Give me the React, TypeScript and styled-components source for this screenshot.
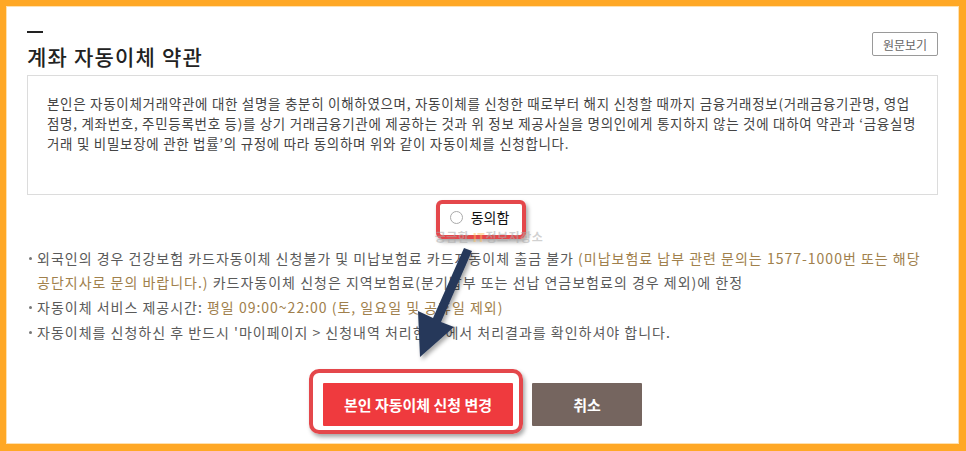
import styled, { createGlobalStyle } from "styled-components";

const GlobalStyle = createGlobalStyle`
  body {
    margin: 0;
    font-family: "Noto Sans CJK KR", "Liberation Sans", sans-serif;
  }
`;

// 주황 테두리 캡처 프레임
const Frame = styled.div`
  width: 966px;
  height: 451px;
  box-sizing: border-box;
  background: #ffa826;
  padding: 6px 7px 7px 6px;
`;
const Panel = styled.div`
  position: relative;
  height: 100%;
  box-sizing: border-box;
  background: #fff;
  box-shadow: inset 0 0 0 1px #ffe1b0;
  padding: 25px 21px 0 21px;
  display: flex;
  flex-direction: column;
`;
const Header = styled.div`
  display: flex;
  justify-content: space-between;
  align-items: flex-start;
`;
const TitleBlock = styled.div`
  display: flex;
  flex-direction: column;
`;
const Dash = styled.span`
  width: 16px;
  height: 2px;
  background: #222;
`;
const Title = styled.h2`
  margin: 9px 0 0;
  font-size: 21px;
  line-height: 28px;
  font-weight: 500;
  letter-spacing: 1.2px;
  color: #222;
`;
const OriginalButton = styled.button`
  margin-top: 1px;
  width: 66px;
  height: 24px;
  box-sizing: border-box;
  background: #fff;
  border: 1px solid #9a9a9a;
  border-radius: 2px;
  font-family: inherit;
  font-size: 12px;
  color: #666;
  padding: 0;
`;
const TermsBox = styled.div`
  margin-top: 5px;
  height: 120px;
  box-sizing: border-box;
  border: 1px solid #dcdcdc;
  padding: 17px 19px 0;
  font-size: 13.5px;
  letter-spacing: 0.7px;
  line-height: 20px;
  color: #444;
  white-space: nowrap;
`;
const AgreeRow = styled.div`
  position: relative;
  margin-top: 14px;
  margin-bottom: 4px;
  display: flex;
  justify-content: center;
`;
const AgreeLabel = styled.label`
  position: relative;
  display: flex;
  align-items: center;
  gap: 8px;
  height: 16px;
  line-height: 16px;
  font-size: 14px;
  color: #111;
  margin-left: -6px;
`;
const Radio = styled.span`
  width: 11px;
  height: 11px;
  border-radius: 50%;
  border: 1px solid #aaa;
  background: #fff;
`;
// 캡처 위의 빨간 강조 박스
const Highlight = styled.span<{ $inset: string; $radius: number }>`
  position: absolute;
  inset: ${(p) => p.$inset};
  border: 4px solid #e4474b;
  border-radius: ${(p) => p.$radius}px;
  box-shadow: 2px 3px 4px rgba(0, 0, 0, 0.35);
  pointer-events: none;
`;
const Watermark = styled.span`
  position: absolute;
  left: 50%;
  top: 22px;
  transform: translateX(-44%);
  font-size: 12px;
  line-height: 12px;
  font-weight: 700;
  letter-spacing: 0.5px;
  color: rgba(170, 170, 170, 0.55);
  white-space: nowrap;
  b {
    color: rgba(255, 190, 90, 0.5);
  }
`;
const Notes = styled.ul`
  list-style: none;
  margin: 17px 0 0;
  padding: 0;
  font-size: 14px;
  letter-spacing: 1px;
  line-height: 24px;
  color: #5a5a5a;
  white-space: nowrap;
`;
const Note = styled.li`
  position: relative;
  padding-left: 10px;
  margin-bottom: 1px;
  &::before {
    content: "";
    position: absolute;
    left: 2px;
    top: 11px;
    width: 3px;
    height: 3px;
    border-radius: 50%;
    background: #777;
  }
`;
const Accent = styled.span`
  color: #a0804c;
`;
const ButtonRow = styled.div`
  margin-top: 38px;
  display: flex;
  justify-content: center;
  gap: 19px;
`;
const ButtonWrap = styled.div`
  position: relative;
`;
const ActionButton = styled.button<{ $primary?: boolean }>`
  height: 43px;
  width: ${(p) => (p.$primary ? 190 : 110)}px;
  border: none;
  border-radius: 1px;
  background: ${(p) => (p.$primary ? "#ef3a3e" : "#75655f")};
  color: #fff;
  font-family: inherit;
  font-size: 15px;
  font-weight: 700;
  padding: 0;
`;
const ArrowLayer = styled.svg`
  position: absolute;
  left: 0;
  top: 0;
  pointer-events: none;
`;

export default function App() {
  return (
    <>
      <GlobalStyle />
      <Frame>
        <Panel>
          <Header>
            <TitleBlock>
              <Dash />
              <Title>계좌 자동이체 약관</Title>
            </TitleBlock>
            <OriginalButton>원문보기</OriginalButton>
          </Header>

          <TermsBox>
            본인은 자동이체거래약관에 대한 설명을 충분히 이해하였으며, 자동이체를 신청한 때로부터 해지 신청할 때까지 금융거래정보(거래금융기관명, 영업
            <br />
            점명, 계좌번호, 주민등록번호 등)를 상기 거래금융기관에 제공하는 것과 위 정보 제공사실을 명의인에게 통지하지 않는 것에 대하여 약관과 ‘금융실명
            <br />
            거래 및 비밀보장에 관한 법률’의 규정에 따라 동의하며 위와 같이 자동이체를 신청합니다.
          </TermsBox>

          <AgreeRow>
            <AgreeLabel>
              <Radio />
              동의함
              <Highlight $inset="-9px -17px -14px -14px" $radius={6} />
            </AgreeLabel>
            <Watermark>
              궁금한 <b>IT</b>정보저장소
            </Watermark>
          </AgreeRow>

          <Notes>
            <Note>
              외국인의 경우 건강보험 카드자동이체 신청불가 및 미납보험료 카드자동이체 출금 불가{" "}
              <Accent>(미납보험료 납부 관련 문의는 1577-1000번 또는 해당</Accent>
              <br />
              <Accent>공단지사로 문의 바랍니다.)</Accent> 카드자동이체 신청은 지역보험료(분기납부 또는 선납 연금보험료의 경우 제외)에 한정
            </Note>
            <Note>
              자동이체 서비스 제공시간: <Accent>평일 09:00~22:00 (토, 일요일 및 공휴일 제외)</Accent>
            </Note>
            <Note>자동이체를 신청하신 후 반드시 '마이페이지 &gt; 신청내역 처리현황'에서 처리결과를 확인하셔야 합니다.</Note>
          </Notes>

          <ButtonRow>
            <ButtonWrap>
              <ActionButton $primary>본인 자동이체 신청 변경</ActionButton>
              <Highlight $inset="-14px -10px -8px -14px" $radius={10} />
            </ButtonWrap>
            <ButtonWrap>
              <ActionButton>취소</ActionButton>
            </ButtonWrap>
          </ButtonRow>

          {/* 안내용 화살표 */}
          <ArrowLayer width="953" height="438" viewBox="6 6 953 438">
            <defs>
              <filter id="arrowShadow" x="-30%" y="-30%" width="160%" height="160%">
                <feDropShadow dx="2" dy="3" stdDeviation="2" floodColor="#000" floodOpacity="0.35" />
              </filter>
            </defs>
            <polygon
              filter="url(#arrowShadow)"
              fill="#27395a"
              points="472,251 464,248 433,318 418,311 420,357 454,327 441,322"
            />
          </ArrowLayer>
        </Panel>
      </Frame>
    </>
  );
}
